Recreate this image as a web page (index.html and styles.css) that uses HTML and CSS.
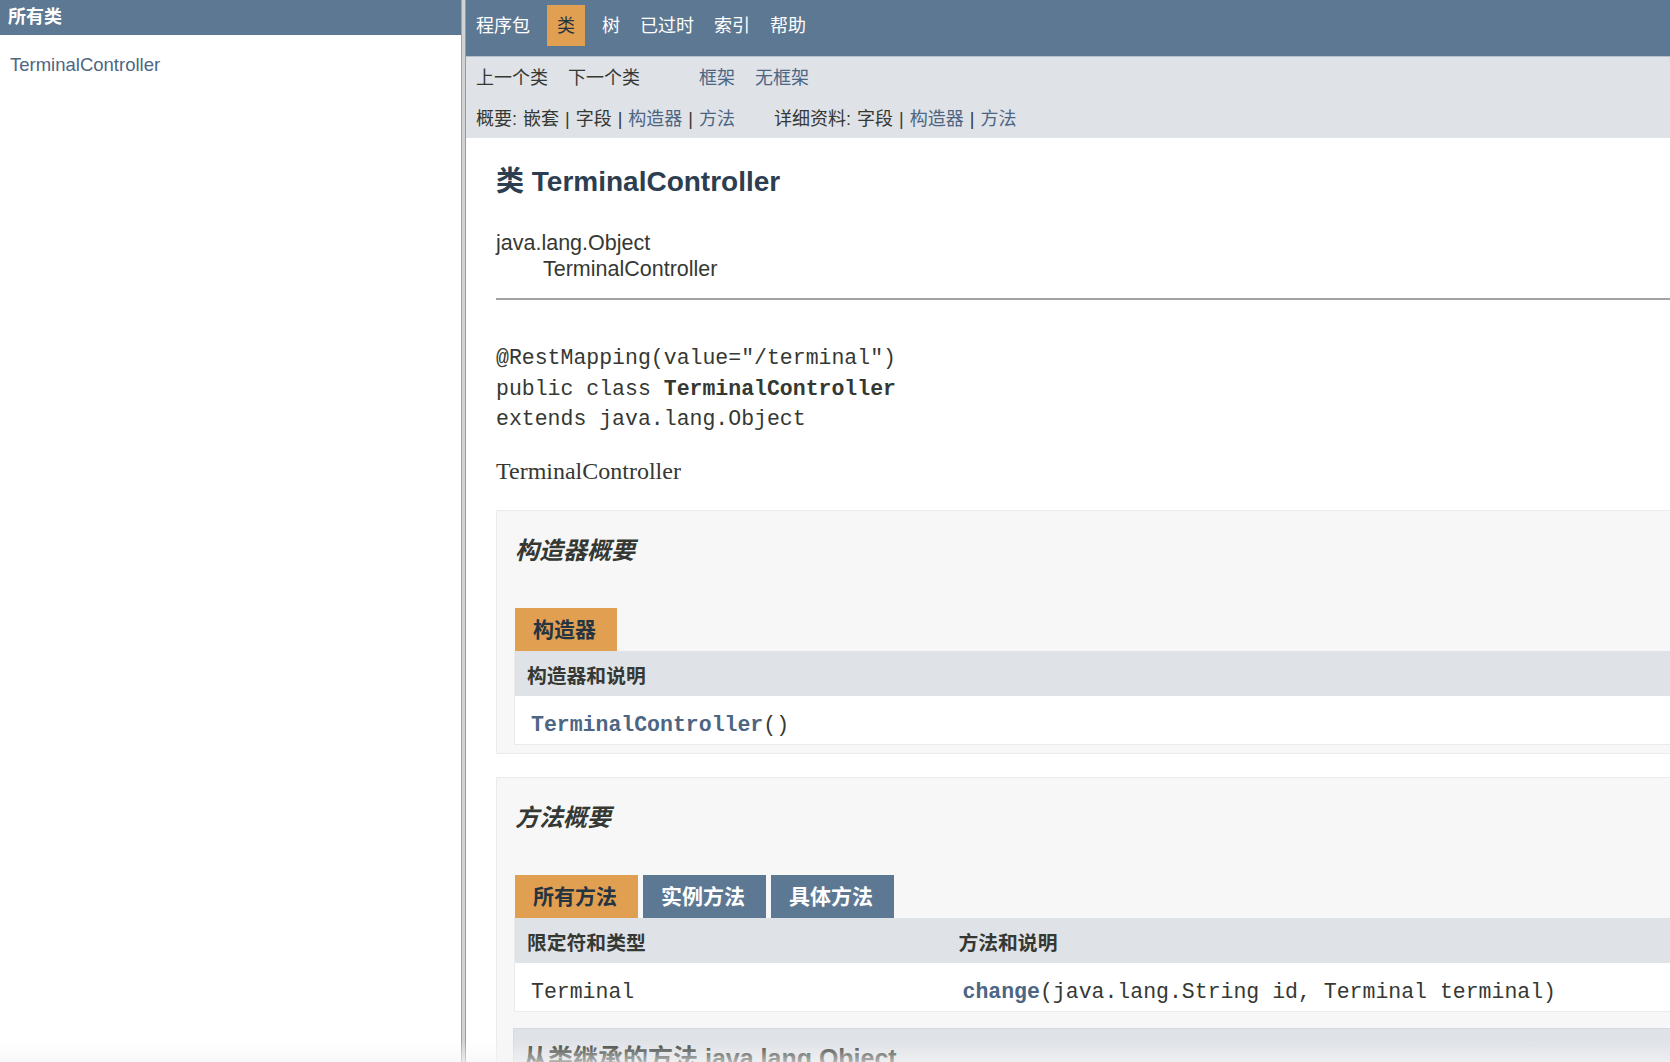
FILE: index.html
```html
<!DOCTYPE html>
<html lang="zh-CN">
<head>
<meta charset="utf-8">
<title>TerminalController</title>
<link rel="stylesheet" href="styles.css">
</head>
<body>
<div class="frames">
  <aside class="left-frame">
    <h1 class="bar">所有类</h1>
    <ul class="class-list">
      <li><a href="#">TerminalController</a></li>
    </ul>
  </aside>
  <div class="divider"></div>
  <main class="right-frame">
    <nav class="top-nav">
      <ul class="nav-list">
        <li>程序包</li>
        <li class="nav-active">类</li>
        <li>树</li>
        <li>已过时</li>
        <li>索引</li>
        <li>帮助</li>
      </ul>
    </nav>
    <div class="sub-nav">
      <div class="sub-row sub-row-1">
        <ul class="sub-list">
          <li>上一个类</li>
          <li>下一个类</li>
        </ul>
        <ul class="sub-list">
          <li><a href="#">框架</a></li>
          <li><a href="#">无框架</a></li>
        </ul>
      </div>
      <div class="sub-row sub-row-2">
        <div class="sub-group">概要:&nbsp;嵌套&nbsp;|&nbsp;字段&nbsp;|&nbsp;<a href="#">构造器</a>&nbsp;|&nbsp;<a href="#">方法</a></div>
        <div class="sub-group">详细资料:&nbsp;字段&nbsp;|&nbsp;<a href="#">构造器</a>&nbsp;|&nbsp;<a href="#">方法</a></div>
      </div>
    </div>
    <div class="content">
      <h2 class="title">类 TerminalController</h2>
      <ul class="inheritance">
        <li>java.lang.Object</li>
        <li class="inherit-child">TerminalController</li>
      </ul>
      <div class="rule"></div>
      <pre class="signature">@RestMapping(value="/terminal")
public class <b>TerminalController</b>
extends java.lang.Object</pre>
      <div class="block-desc">TerminalController</div>
      <section class="summary">
        <h3 class="summary-title">构造器概要</h3>
        <div class="tabs"><span class="tab tab-active">构造器</span></div>
        <table class="member-table">
          <thead><tr><th>构造器和说明</th></tr></thead>
          <tbody><tr><td><code><a href="#" class="member-link">TerminalController</a>()</code></td></tr></tbody>
        </table>
      </section>
      <section class="summary">
        <h3 class="summary-title">方法概要</h3>
        <div class="tabs">
          <span class="tab tab-active">所有方法</span>
          <span class="tab">实例方法</span>
          <span class="tab">具体方法</span>
        </div>
        <table class="member-table">
          <thead><tr><th class="col-first">限定符和类型</th><th>方法和说明</th></tr></thead>
          <tbody><tr><td class="col-first"><code>Terminal</code></td><td><code><a href="#" class="member-link">change</a>(java.lang.String&nbsp;id, Terminal&nbsp;terminal)</code></td></tr></tbody>
        </table>
        <h3 class="inherited">从类继承的方法&nbsp;java.lang.Object</h3>
      </section>
    </div>
  </main>
</div>
<div class="bottom-fade"></div>
</body>
</html>
```

FILE: styles.css
```css
* { box-sizing: border-box; }

html, body {
  margin: 0;
  padding: 0;
  height: 1062px;
  overflow: hidden;
}

body {
  background: #ffffff;
  color: #353833;
  font-family: "Liberation Sans", "Noto Sans CJK SC", sans-serif;
  font-size: 18px;
}

a { color: #4c6684; text-decoration: none; }

.frames {
  display: flex;
  height: 1062px;
}

/* ---------- left frame ---------- */
.left-frame {
  width: 461px;
  flex: none;
  background: #ffffff;
}

.bar {
  margin: 0;
  height: 35px;
  line-height: 35px;
  padding-left: 8px;
  background: #5d7893;
  color: #ffffff;
  font-size: 18px;
  font-weight: bold;
}

.class-list {
  list-style: none;
  margin: 18px 0 0 0;
  padding: 0 0 0 10px;
  font-size: 18.5px;
  line-height: 24px;
}

.divider {
  width: 5px;
  flex: none;
  background: #d2d2d2;
  border-left: 1px solid #a3a3a3;
  border-right: 1px solid #9a9a9a;
}

/* ---------- right frame ---------- */
.right-frame {
  flex: 1;
  min-width: 0;
  overflow: hidden;
}

.top-nav {
  height: 57px;
  background: #5d7893;
  border-bottom: 1px solid #b5c0cb;
  padding-top: 6px;
}

.nav-list {
  display: flex;
  list-style: none;
  margin: 0;
  padding: 0;
}

.nav-list li {
  padding: 0 10px;
  line-height: 40px;
  height: 40px;
  color: #ffffff;
  font-size: 18px;
}

.nav-list li.nav-active {
  background: #e19f52;
  color: #253441;
  margin: 0 7px;
  height: 41px;
  margin-top: -1px;
  line-height: 42px;
}

.sub-nav {
  background: #dfe2e7;
  height: 81px;
  font-size: 18px;
}

.sub-row {
  display: flex;
}

.sub-row-1 {
  height: 39px;
  padding-top: 3px;
  line-height: 36px;
}

.sub-row-2 {
  height: 42px;
  padding-top: 4px;
  line-height: 38px;
  word-spacing: 1px;
}

.sub-list {
  display: flex;
  list-style: none;
  margin: 0 39px 0 0;
  padding: 0;
}

.sub-list li {
  padding: 0 10px;
}

.sub-group {
  padding: 0 10px;
  margin-right: 19px;
  white-space: nowrap;
}

.content {
  display: flex;
  flex-direction: column;
  padding: 0 0 0 30px;
}

.title {
  margin: 26px 0 0 0;
  font-size: 28px;
  line-height: 36px;
  font-weight: bold;
  color: #2c3e50;
}

.inheritance {
  list-style: none;
  margin: 30px 0 0 0;
  padding: 0;
  font-size: 21.5px;
  line-height: 26px;
}

.inherit-child {
  margin-left: 47px;
}

.rule {
  margin-top: 16px;
  height: 2px;
  background: #a2a2a2;
}

.signature {
  margin: 43px 0 0 0;
  font-family: "Liberation Mono", "Noto Sans CJK SC", monospace;
  font-size: 21.5px;
  line-height: 30.5px;
  color: #353833;
}

.block-desc {
  margin-top: 20px;
  font-family: "Liberation Serif", "Noto Sans CJK SC", serif;
  font-size: 24px;
  line-height: 32px;
}

.summary {
  margin-top: 23px;
  margin-right: -80px;
  background: #f7f7f7;
  border: 1px solid #ebebeb;
  padding: 23px 0 8px 17px;
}

.summary-title {
  margin: 0 0 40px 1px;
  font-size: 24px;
  line-height: 34px;
  font-style: italic;
  font-weight: bold;
  color: #353833;
}

.tabs {
  display: flex;
  gap: 5px;
  margin-left: 1px;
}

.tab {
  height: 43px;
  line-height: 43px;
  padding: 0 21px 0 18px;
  background: #5d7893;
  color: #ffffff;
  font-size: 21px;
  font-weight: bold;
  white-space: nowrap;
}

.tab.tab-active {
  background: #e19f52;
  color: #253441;
}

.member-table {
  width: 100%;
  border-collapse: collapse;
  border-left: 1px solid #ebebeb;
  border-bottom: 1px solid #ebebeb;
  background: #ffffff;
}

.member-table th {
  background: #dfe2e7;
  text-align: left;
  padding: 12px 3px 6px 12px;
  line-height: 27px;
  font-size: 19.8px;
  font-weight: bold;
  color: #353833;
}

.member-table td {
  padding: 14px 3px 4px 16px;
  line-height: 30px;
  vertical-align: top;
}

.member-table .col-first {
  width: 432px;
}

.member-table code {
  font-family: "Liberation Mono", "Noto Sans CJK SC", monospace;
  font-size: 21.5px;
  color: #353833;
  white-space: nowrap;
}

.member-link {
  font-weight: bold;
  color: #4c6684;
}

.inherited {
  margin: 16px 0 0 -1px;
  padding: 12px 9px 8px 9px;
  background: #dfe2e7;
  border: 1px solid #d3dae1;
  font-size: 25px;
  line-height: 34px;
  font-weight: bold;
  color: #353833;
}

.bottom-fade {
  position: fixed;
  left: 0;
  right: 0;
  bottom: 0;
  height: 22px;
  background: linear-gradient(to bottom, rgba(255,255,255,0), rgba(245,245,245,0.65));
  pointer-events: none;
}
```
